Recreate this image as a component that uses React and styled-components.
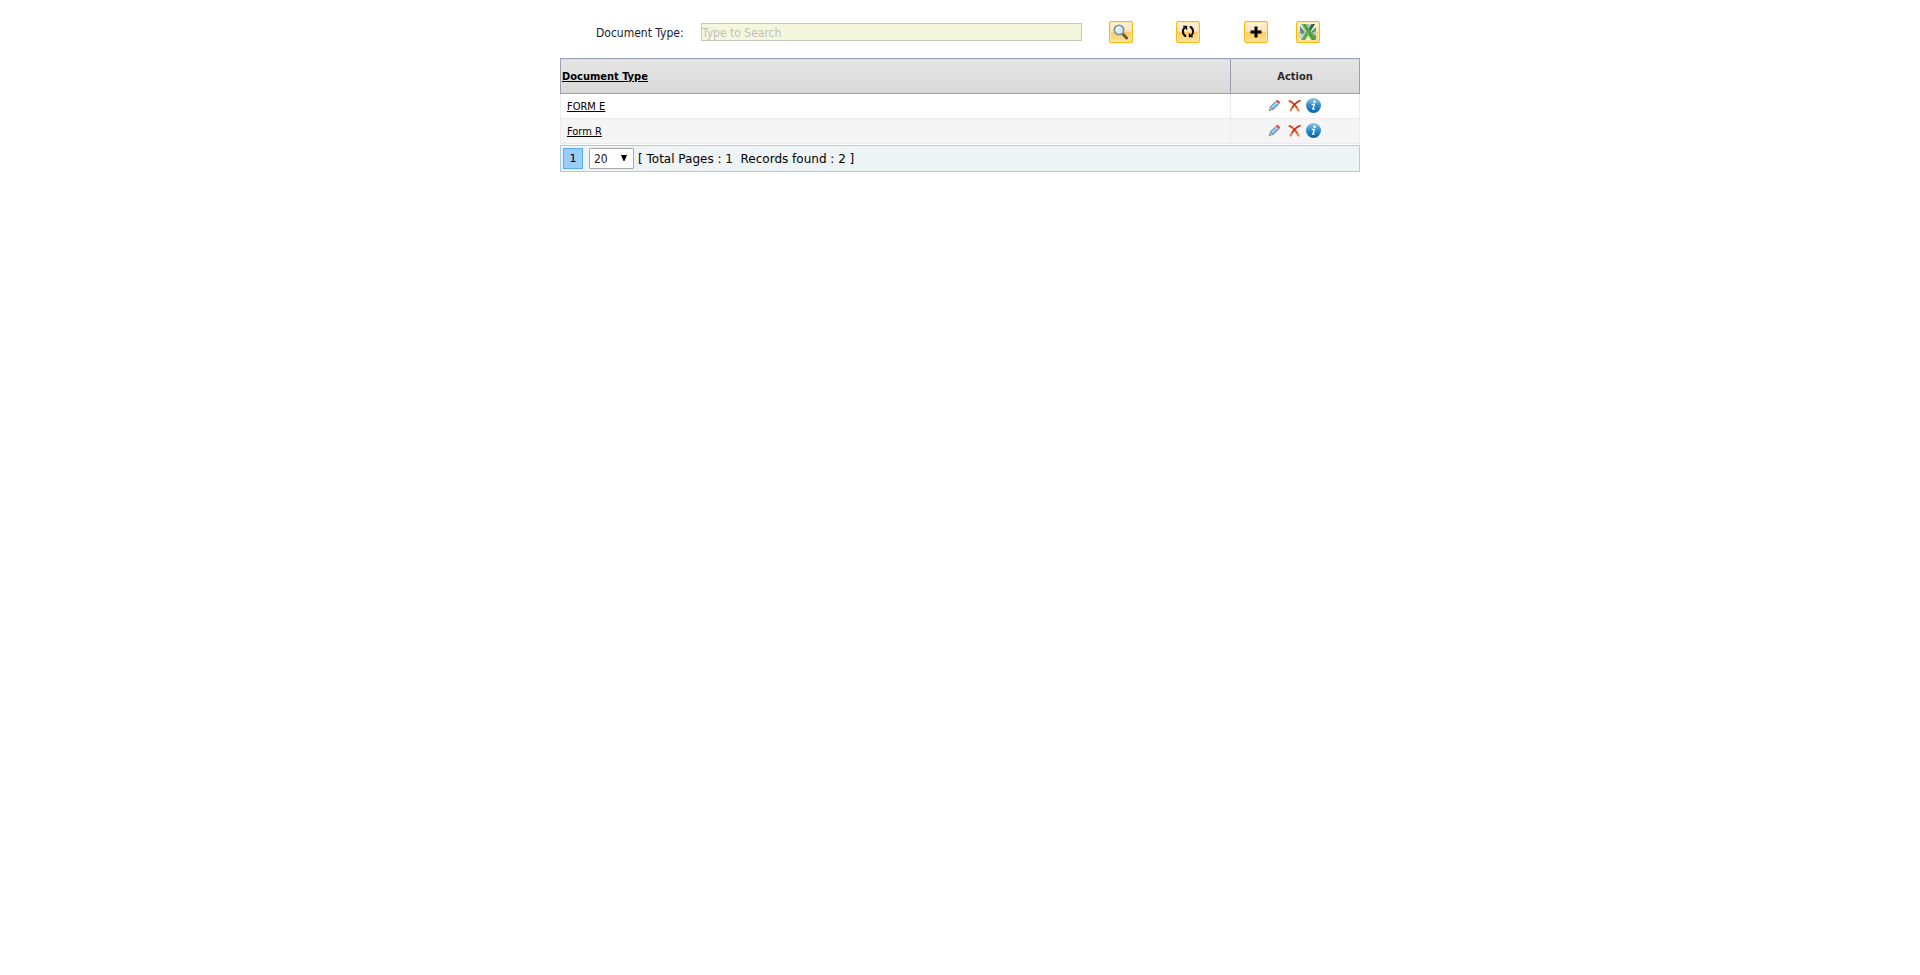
import React from "react";
import styled, { createGlobalStyle } from "styled-components";

const GlobalStyle = createGlobalStyle`
  * { box-sizing: border-box; }
  body {
    margin: 0;
    background: #fff;
    color: #000;
    font-family: Tahoma, "DejaVu Sans Condensed", "DejaVu Sans", sans-serif;
    font-size: 12px;
  }
`;

const Page = styled.main`
  width: 100%;
  max-width: 800px;
  margin: 0 auto;
`;

const SearchBar = styled.form`
  display: flex;
  align-items: center;
  height: 58px;
  padding: 6px 40px 0 36px;
`;

const SearchLabel = styled.label`
  flex: none;
  width: 105px;
  padding-top: 2px;
  color: #1a1a33;
  line-height: 16px;
`;

const SearchInput = styled.input`
  flex: 1;
  min-width: 0;
  height: 18px;
  margin-right: 27px;
  padding: 1px 0 0;
  border: 1px solid #c6c9c0;
  border-radius: 0;
  background: #f5f7dd;
  font: inherit;
  outline: none;
  &::placeholder { color: #bfbfbf; opacity: 1; }
`;

const ToolButton = styled.button`
  display: flex;
  flex: none;
  align-items: center;
  justify-content: center;
  width: 24px;
  height: 22px;
  margin: 0 ${(p) => p.$gap || 0}px 0 0;
  padding: 0;
  border: 1px solid #ffb70f;
  border-radius: 2px;
  background: linear-gradient(#fff4e3 0, #ffe2b8 48%, #ffcd62 52%, #ffe39c 100%);
  box-shadow: inset 0 0 0 1px #ffe6a8;
  cursor: pointer;
  svg { display: block; }
`;

const Grid = styled.table`
  width: 100%;
  border-collapse: collapse;
  table-layout: fixed;
`;

const HeadCell = styled.th`
  width: ${(p) => p.$width || "auto"};
  height: 35px;
  padding: 2px 1px 0;
  border: 1px solid #96a2b4;
  background: linear-gradient(#e5e5e5, #d9d9d9);
  color: #2b2b2b;
  font-size: 11px;
  line-height: 16px;
  font-weight: bold;
  text-align: ${(p) => p.$align || "center"};
`;

const Row = styled.tr`
  background: ${(p) => (p.$alt ? "#f5f5f5" : "#fff")};
`;

const Cell = styled.td`
  height: 25px;
  padding: ${(p) => (p.$icons ? "0 8px 2px 6px" : "2px 6px 0")};
  border: 1px solid #ebebeb;
  font-size: 11px;
  line-height: 16px;
`;

const TextLink = styled.a`
  color: #000;
  text-decoration: underline;
`;

const Actions = styled.div`
  display: flex;
  align-items: center;
  justify-content: center;
  gap: 4px;
  height: 16px;
`;

const IconButton = styled.button`
  display: block;
  width: 15px;
  height: 15px;
  padding: 0;
  border: 0;
  background: none;
  cursor: pointer;
  svg { display: block; }
`;

const Pager = styled.nav`
  display: flex;
  align-items: center;
  height: 27px;
  margin-top: 1px;
  padding: 0 2px;
  border: 1px solid #a6cdf3;
  background: #eef3f6;
`;

const PageButton = styled.button`
  width: 20px;
  height: 21px;
  padding: 0;
  border: 1px solid #5caaf5;
  background: #99ccff;
  color: #000;
  font-family: Verdana, "DejaVu Sans", sans-serif;
  font-size: 11px;
`;

const SelectBox = styled.div`
  position: relative;
  margin: 0 4px 0 6px;
  svg {
    position: absolute;
    top: 7px;
    right: 7px;
    pointer-events: none;
  }
`;

const SizeSelect = styled.select`
  display: block;
  appearance: none;
  width: 45px;
  height: 21px;
  padding: 1px 4px 0;
  border: 1px solid #a9a9a9;
  border-radius: 1px;
  background: #fff;
  color: #222;
  font: inherit;
`;

const PagerText = styled.span`
  padding-top: 1px;
  font-family: Verdana, "DejaVu Sans", sans-serif;
  line-height: 16px;
  white-space: pre;
`;

const SearchIcon = () => (
  <svg width="16" height="16" viewBox="0 0 16 16">
    <path d="M9.5 9.5L13.6 14" stroke="#5d5047" strokeWidth="3" strokeLinecap="round" />
    <path d="M9.8 9L13.7 13.2" stroke="#94735c" strokeWidth="1" strokeLinecap="round" />
    <circle cx="6" cy="6" r="4.7" fill="#d7edfb" stroke="#7f8fa3" strokeWidth="1.7" />
    <path d="M3.4 5.8A2.8 2.8 0 0 1 7 3.2" fill="none" stroke="#fff" strokeWidth="1.5" />
  </svg>
);

const RefreshIcon = () => (
  <svg width="16" height="16" viewBox="0 0 16 16">
    <g fill="none" stroke="#000" strokeWidth="2">
      <path d="M6.2 12.2C3 11.5 1.7 6.5 4.4 3.6" />
      <path d="M9.8 2.8C13 3.5 14.3 8.5 11.6 11.4" />
    </g>
    <path d="M2.6 1.7H7.2V6.3ZM13.4 13.3H8.8V8.7Z" />
  </svg>
);

const PlusIcon = () => (
  <svg width="16" height="16" viewBox="0 0 16 16">
    <path d="M6.5 2.5H9.5V6.500H13.500V9.500H9.500V13.500H6.500V9.500H2.500V6.500H6.500Z" />
  </svg>
);

const ExcelIcon = () => (
  <svg width="16" height="16" viewBox="0 0 16 16">
    <rect width="16" height="16" fill="#eaf2ec" />
    <path d="M0 2L5 8L2 12L0 14Z" fill="#5d8d84" />
    <path d="M0 9L3 10L0 15Z" fill="#c3d9d0" />
    <path d="M5 0H10L8 5Z" fill="#a9c7bb" />
    <path d="M16 3V16H15L10 9Z" fill="#5c8f6a" />
    <path d="M16 7V12L12 9Z" fill="#bcd4bf" />
    <path d="M11 0H15L5 16H1Z" fill="#6f9f7c" />
    <path d="M12 0H15L8.5 10L7 8Z" fill="#2f6a40" />
    <path d="M1 0H6L16 16H11Z" fill="#7fbe55" />
    <path d="M3 0H5L15 16H12.500Z" fill="#429937" />
    <path d="M1 16L6 8L8 11L5 16Z" fill="#66a84b" />
  </svg>
);

const PencilIcon = () => (
  <svg width="15" height="15" viewBox="0 0 17 17">
    <path d="M1.500 14.300L2.500 10.300L5.500 13.200Z" fill="#f1d4a6" stroke="#999" strokeWidth=".7" />
    <path d="M1.500 14.300L2 12.500L3.300 13.800Z" fill="#333" />
    <path d="M2.500 10.300L8.800 4L12 7.100L5.500 13.200Z" fill="#71b5e9" stroke="#456f9d" strokeWidth=".9" />
    <path d="M4 11L9.700 5.400" stroke="#bde4ff" strokeWidth="1.200" />
    <path d="M8.300 4.500L9.300 3.500L12.500 6.600L11.500 7.600Z" fill="#d9dfe4" />
    <path d="M9.300 3.500L10.100 2.700Q10.800 2.200 11.500 2.900L13 4.400Q13.600 5.200 13 5.900L12.300 6.600Z" fill="#e9475b" stroke="#b93c50" strokeWidth=".8" />
  </svg>
);

const DeleteIcon = () => (
  <svg width="15" height="15" viewBox="0 0 15 15">
    <path d="M2.500 3Q7 4.500 11.500 12.500" fill="none" stroke="#e84d1f" strokeWidth="2" strokeLinecap="round" />
    <path d="M13 2.700Q7.500 4.500 3.500 12.500" fill="none" stroke="#c92d12" strokeWidth="1.700" strokeLinecap="round" />
    <path d="M4.800 10.200L3.500 12.500M10.500 10.700L11.600 12.500" stroke="#efa043" strokeWidth="1.100" strokeLinecap="round" />
  </svg>
);

const InfoIcon = () => (
  <svg width="15" height="15" viewBox="0 0 15 15">
    <defs>
      <linearGradient id="info-blue" x2="0" y2="1">
        <stop stopColor="#8bc7e8" />
        <stop offset=".5" stopColor="#338fc7" />
        <stop offset="1" stopColor="#075eaa" />
      </linearGradient>
    </defs>
    <circle cx="7.500" cy="7.500" r="7.500" fill="url(#info-blue)" />
    <circle cx="8.600" cy="3.800" r="1.200" fill="#fff" />
    <path d="M5.800 6.300H8.300L7 11H8.600M6.200 11H7.500" fill="none" stroke="#fff" strokeWidth="1.300" />
  </svg>
);

const ArrowIcon = () => (
  <svg width="6" height="6" viewBox="0 0 6 6">
    <path d="M0 0H6L3.500 6H2.500Z" />
  </svg>
);

const rowActions = [
  { name: "Edit", Icon: PencilIcon },
  { name: "Delete", Icon: DeleteIcon },
  { name: "Information", Icon: InfoIcon },
];

const documents = ["FORM E", "Form R"];

export default function App() {
  return (
    <>
      <GlobalStyle />
      <Page>
        <SearchBar onSubmit={(e) => e.preventDefault()}>
          <SearchLabel htmlFor="document-type">Document Type:</SearchLabel>
          <SearchInput id="document-type" type="text" placeholder="Type to Search" />
          <ToolButton type="submit" aria-label="Search" $gap={43}><SearchIcon /></ToolButton>
          <ToolButton type="button" aria-label="Refresh" $gap={44}><RefreshIcon /></ToolButton>
          <ToolButton type="button" aria-label="Add" $gap={28}><PlusIcon /></ToolButton>
          <ToolButton type="button" aria-label="Export to Excel"><ExcelIcon /></ToolButton>
        </SearchBar>
        <Grid>
          <thead>
            <tr>
              <HeadCell $align="left"><TextLink href="#sort">Document Type</TextLink></HeadCell>
              <HeadCell $width="129px">Action</HeadCell>
            </tr>
          </thead>
          <tbody>
            {documents.map((name, i) => (
              <Row key={name} $alt={i % 2 === 1}>
                <Cell><TextLink href="#document">{name}</TextLink></Cell>
                <Cell $icons>
                  <Actions>
                    {rowActions.map(({ name: action, Icon }) => (
                      <IconButton key={action} type="button" aria-label={`${action} ${name}`}><Icon /></IconButton>
                    ))}
                  </Actions>
                </Cell>
              </Row>
            ))}
          </tbody>
        </Grid>
        <Pager aria-label="Pagination">
          <PageButton type="button">1</PageButton>
          <SelectBox>
            <SizeSelect aria-label="Records per page" defaultValue="20">
              <option>20</option>
              <option>50</option>
              <option>100</option>
            </SizeSelect>
            <ArrowIcon />
          </SelectBox>
          <PagerText>[ Total Pages : 1  Records found : 2 ]</PagerText>
        </Pager>
      </Page>
    </>
  );
}
